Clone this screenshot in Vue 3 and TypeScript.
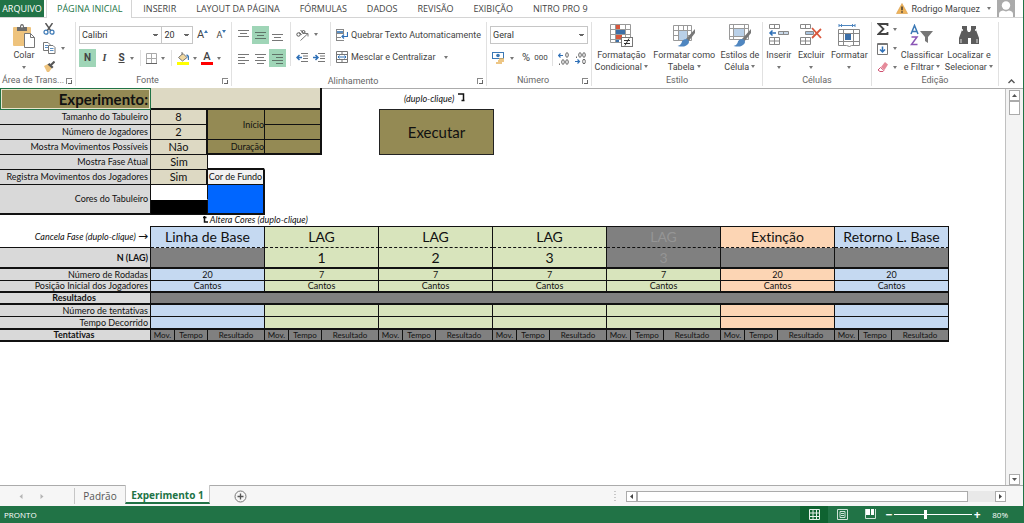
<script setup lang="ts">
import { ref } from 'vue'

interface Phase {
  name: string
  lag: string
  rounds: number
  tone: 'blue' | 'green' | 'peach'
  cancelled?: boolean
}

const ribbonTabs = [
  'INSERIR',
  'LAYOUT DA PÁGINA',
  'FÓRMULAS',
  'DADOS',
  'REVISÃO',
  'EXIBIÇÃO',
  'NITRO PRO 9',
]

const phases: Phase[] = [
  { name: 'Linha de Base', lag: '', rounds: 20, tone: 'blue' },
  { name: 'LAG', lag: '1', rounds: 7, tone: 'green' },
  { name: 'LAG', lag: '2', rounds: 7, tone: 'green' },
  { name: 'LAG', lag: '3', rounds: 7, tone: 'green' },
  { name: 'LAG', lag: '3', rounds: 7, tone: 'green', cancelled: true },
  { name: 'Extinção', lag: '', rounds: 20, tone: 'peach' },
  { name: 'Retorno L. Base', lag: '', rounds: 20, tone: 'blue' },
]

const zoom = ref(80)
</script>

<template>
  <div class="window">
    <nav class="tabs">
      <button class="tab file">ARQUIVO</button>
      <button class="tab current">PÁGINA INICIAL</button>
      <button v-for="t in ribbonTabs" :key="t" class="tab">{{ t }}</button>
      <div class="account">
        <svg width="12" height="11" viewBox="0 0 12 11">
          <path d="M6 .5 11.5 10.500H.5Z" fill="#f0b45a" stroke="#d99a45" stroke-width=".6" />
          <path d="M6 3.500v3.800M6 8.300v1.400" stroke="#333" stroke-width="1.400" />
        </svg>
        <button class="user">Rodrigo Marquez<i class="caret"></i></button>
        <svg class="avatar" width="18" height="17" viewBox="0 0 18 17">
          <rect width="18" height="17" fill="#ababab" />
          <circle cx="9" cy="5.500" r="4.200" fill="#fff" />
          <path d="M2 17v-3q0-3 4-3.500l3 1 3-1q4 .5 4 3.500v3Z" fill="#fff" />
        </svg>
      </div>
    </nav>

    <header class="ribbon">
      <section class="group g-clip">
        <div class="body">
          <button class="big paste">
            <svg width="22" height="24" viewBox="0 0 22 24">
              <rect x="0" y="3" width="18" height="19" rx="1" fill="#eec37d" />
              <path d="M4 3h3q0-3 2-3t2 3h3v4H4Z" fill="#6b6b6b" />
              <circle cx="9" cy="2.500" r="1" fill="#fff" />
              <path d="M11.500 9.500h6l4 4v10h-10Z" fill="#fff" stroke="#777" />
              <path d="M17.500 9.500v4h4" fill="none" stroke="#777" />
            </svg>
            <span>Colar</span><i class="caret"></i>
          </button>
          <div class="stack">
            <button aria-label="Recortar">
              <svg width="12" height="12" viewBox="0 0 12 12" fill="none">
                <path d="M2.500 0 8 8M9.500 0 4 8" stroke="#555" stroke-width="1.400" />
                <circle cx="3" cy="9.200" r="2" stroke="#3b78b5" stroke-width="1.200" />
                <circle cx="9" cy="9.200" r="2" stroke="#3b78b5" stroke-width="1.200" />
              </svg>
            </button>
            <button aria-label="Copiar">
              <svg width="13" height="12" viewBox="0 0 13 12" fill="#fff" stroke="#777">
                <path d="M.5.5H5l2 2V8.500H.5Z" />
                <path d="M2 3.500h3M2 5.500h3" stroke="#5b8fc4" />
                <path d="M5.500 3.500H10l2 2v6H5.500Z" />
                <path d="M7 6.500h3.500M7 8.500h3.500" stroke="#5b8fc4" />
              </svg>
              <i class="caret"></i>
            </button>
            <button aria-label="Pincel de Formatação">
              <svg width="12" height="11" viewBox="0 0 12 11">
                <path d="M1 5 5 3l4 4-3 4H4Z" fill="#eec37d" />
                <path d="m4.500 3.500 2-1.500 4 4-1.500 1.500Z" fill="#555" />
                <path d="m8 4 3.500-3.500" stroke="#555" stroke-width="2" />
              </svg>
            </button>
          </div>
        </div>
        <h2>Área de Trans...</h2>
        <button class="launcher" aria-label="Opções da Área de Transferência"></button>
      </section>

      <section class="group g-font">
        <div class="body rows">
          <div class="line">
            <select class="s-font" aria-label="Fonte"><option>Calibri</option></select>
            <select class="s-size" aria-label="Tamanho"><option>20</option></select>
            <button class="grow" aria-label="Aumentar Fonte">
              <span class="la">A</span>
              <svg width="4" height="10" viewBox="0 0 4 10"><path d="M0 3h4L2 0Z" fill="#3b78b5" /></svg>
            </button>
            <button class="grow small" aria-label="Diminuir Fonte">
              <span class="la">A</span>
              <svg width="4" height="10" viewBox="0 0 4 10"><path d="M0 0h4L2 3Z" fill="#3b78b5" /></svg>
            </button>
          </div>
          <div class="line">
            <button class="tog on"><b>N</b></button>
            <button class="tog"><b class="ital">I</b></button>
            <button class="tog"><b class="und">S</b></button>
            <i class="caret"></i>
            <span class="sep"></span>
            <button class="ico" aria-label="Bordas">
              <svg width="11" height="11" viewBox="0 0 11 11" fill="none" stroke="#aaa">
                <path d="M.5.5h10v10H.5ZM5.500.5v10M.5 5.500h10" />
                <path d="M0 10.500h11" stroke="#666" />
              </svg>
              <i class="caret"></i>
            </button>
            <span class="sep"></span>
            <button class="ico" aria-label="Cor de Preenchimento">
              <svg width="12" height="13" viewBox="0 0 12 13">
                <path d="m1.500 5.500 4.500-4 4 4-4.500 3.500Z" fill="#f2d9a0" stroke="#777" />
                <path d="M5 3V0" stroke="#777" />
                <path d="M9.500 3q2.500.5 2 5" fill="none" stroke="#3b78b5" stroke-width="1.500" />
                <rect y="10" width="12" height="3" fill="#ffff00" />
              </svg>
              <i class="caret"></i>
            </button>
            <button class="ico" aria-label="Cor da Fonte">
              <span class="fontcolor">A</span>
              <i class="caret"></i>
            </button>
          </div>
        </div>
        <h2>Fonte</h2>
        <button class="launcher" aria-label="Opções de Fonte"></button>
      </section>

      <section class="group g-align">
        <div class="body align">
          <div class="rows">
            <div class="line">
              <button class="al" aria-label="Alinhar em Cima">
                <svg width="11" height="11"><path d="M0 .5h11M2 3.500h7M0 6.500h11" stroke="#777" /></svg>
              </button>
              <button class="al on" aria-label="Alinhar no Meio">
                <svg width="11" height="11"><path d="M0 2.500h11M2 5.500h7M0 8.500h11" stroke="#5f7468" /></svg>
              </button>
              <button class="al" aria-label="Alinhar Embaixo">
                <svg width="11" height="11"><path d="M0 4.500h11M2 7.500h7M0 10.500h11" stroke="#777" /></svg>
              </button>
            </div>
            <div class="line">
              <button class="al" aria-label="Alinhar à Esquerda">
                <svg width="11" height="11"><path d="M0 1.500h11M0 4.500h7M0 7.500h11M0 10.500h7" stroke="#777" /></svg>
              </button>
              <button class="al" aria-label="Centralizar">
                <svg width="11" height="11"><path d="M0 1.500h11M2 4.500h7M0 7.500h11M2 10.500h7" stroke="#777" /></svg>
              </button>
              <button class="al on" aria-label="Alinhar à Direita">
                <svg width="11" height="11"><path d="M0 1.500h11M4 4.500h7M0 7.500h11M4 10.500h7" stroke="#5f7468" /></svg>
              </button>
            </div>
          </div>
          <div class="rows bordered">
            <div class="line">
              <button class="ico" aria-label="Orientação">
                <svg width="13" height="12" viewBox="0 0 13 12" fill="none" stroke="#555">
                  <circle cx="2.500" cy="5.500" r="1.700" />
                  <path d="M3.500 3.500 5.500 6M4.500 1l4 4" />
                  <circle cx="7.500" cy="3" r="1.500" />
                  <path d="M4.500 11.500 12 4.500M12 7.500v-3H9" stroke="#777" />
                </svg>
                <i class="caret"></i>
              </button>
            </div>
            <div class="line">
              <button class="ind" aria-label="Diminuir Recuo">
                <svg width="12" height="9" viewBox="0 0 12 9" fill="none">
                  <path d="M5 .5h7M7 3h5M7 5.500h5M5 8.500h7" stroke="#777" />
                  <path d="M6 4.500H1M3.500 2 1 4.500 3.500 7" stroke="#2f70b7" stroke-width="1.500" />
                </svg>
              </button>
              <button class="ind" aria-label="Aumentar Recuo">
                <svg width="12" height="9" viewBox="0 0 12 9" fill="none">
                  <path d="M5 .5h7M7 3h5M7 5.500h5M5 8.500h7" stroke="#777" />
                  <path d="M0 4.500h5M2.500 2 5 4.500 2.500 7" stroke="#2f70b7" stroke-width="1.500" />
                </svg>
              </button>
            </div>
          </div>
          <div class="rows bordered wide">
            <div class="line">
              <button class="ico">
                <svg width="12" height="12" viewBox="0 0 12 12" fill="none">
                  <path d="M.5 0v12M0 .5h8M3.500 2.500h4M0 4.500h8M0 8.500h5M0 11.500h8M7.500 0v4" stroke="#888" />
                  <rect x="1" y="2" width="6" height="2" fill="#5b8fc4" />
                  <path d="M11.500 3v4.500H6M8 5.500 6 7.500l2 2" stroke="#2f70b7" stroke-width="1.200" />
                </svg>
                <span>Quebrar Texto Automaticamente</span>
              </button>
            </div>
            <div class="line">
              <button class="ico">
                <svg width="12" height="12" viewBox="0 0 12 12" fill="none">
                  <path d="M.5.5h11v11H.5ZM.5 3.500h11M.5 8.500h11M6 .5v3M6 8.500v3" stroke="#777" />
                  <path d="M2 6h8M3.500 4.500 2 6l1.500 1.500M8.500 4.500 10 6 8.500 7.500" stroke="#2f70b7" />
                </svg>
                <span>Mesclar e Centralizar</span><i class="caret far"></i>
              </button>
            </div>
          </div>
        </div>
        <h2>Alinhamento</h2>
        <button class="launcher" aria-label="Opções de Alinhamento"></button>
      </section>

      <section class="group g-num">
        <div class="body rows">
          <div class="line">
            <select class="s-num" aria-label="Formato de Número"><option>Geral</option></select>
          </div>
          <div class="line num">
            <button class="ico" aria-label="Formato de Contabilização">
              <svg width="13" height="12" viewBox="0 0 13 12">
                <rect x=".5" y=".5" width="11" height="6" fill="#fff" stroke="#3b78b5" />
                <circle cx="6" cy="3.500" r="1.800" fill="#3b78b5" />
                <path d="M7 7h5M6 9h6M4 11h6" stroke="#e8b45e" stroke-width="1.400" />
              </svg>
              <i class="caret"></i>
            </button>
            <button class="pct">%</button>
            <button class="thou">000</button>
            <span class="sep"></span>
            <button class="dec" aria-label="Aumentar Casas Decimais">
              <svg width="11" height="7" viewBox="0 0 11 7" fill="none">
                <path d="M5 3.500H.8M2.500 1.500.5 3.500l2 2" stroke="#2f70b7" stroke-width="1.200" />
                <ellipse cx="9" cy="3" rx="1.300" ry="2.300" stroke="#666" />
              </svg>
              <svg width="11" height="6" viewBox="0 0 11 6" fill="none" stroke="#666">
                <ellipse cx="5" cy="3" rx="1.300" ry="2.300" /><ellipse cx="9" cy="3" rx="1.300" ry="2.300" /><path d="M1.500 4.500V6" />
              </svg>
            </button>
            <button class="dec" aria-label="Diminuir Casas Decimais">
              <svg width="11" height="6" viewBox="0 0 11 6" fill="none" stroke="#666">
                <ellipse cx="5" cy="3" rx="1.300" ry="2.300" /><ellipse cx="9" cy="3" rx="1.300" ry="2.300" /><path d="M1.500 4.500V6" />
              </svg>
              <svg width="11" height="7" viewBox="0 0 11 7" fill="none">
                <path d="M0 3.500h4.500M2.500 1.500l2 2-2 2" stroke="#2f70b7" stroke-width="1.200" />
                <ellipse cx="9" cy="3.500" rx="1.300" ry="2.300" stroke="#666" />
              </svg>
            </button>
          </div>
        </div>
        <h2>Número</h2>
        <button class="launcher" aria-label="Opções de Número"></button>
      </section>

      <section class="group g-style">
        <div class="body center">
          <button class="big">
            <svg width="23" height="24" viewBox="0 0 23 24">
              <path d="M.5.5h20v18H.5ZM.5 5.500h20M.5 10.500h20M.5 15.500h20M5.500.5v18M15.500.5v18" fill="#fff" stroke="#999" />
              <rect x="6" y="1" width="4" height="4" fill="#d8573c" /><rect x="6" y="6" width="9" height="4" fill="#3b6fa8" />
              <rect x="6" y="11" width="6" height="4" fill="#d8573c" /><rect x="6" y="16" width="3" height="2" fill="#3b6fa8" />
              <rect x="11.500" y="13.500" width="11" height="9" fill="#fff" stroke="#777" />
              <path d="M14 16.500h6M14 19.500h6M19 14.500l-4 7" stroke="#333" />
            </svg>
            <span>Formatação<br />Condicional <i class="caret"></i></span>
          </button>
          <button class="big">
            <svg width="24" height="24" viewBox="0 0 24 24">
              <path d="M1.500 1.500h18v15h-18ZM1.500 6.500h18M1.500 11.500h18M6.500 1.500v15M11.500 1.500v15M15.500 1.500v15" fill="#fff" stroke="#999" />
              <path d="M7 7h8v9H7Z" fill="#b9d0e8" />
              <path d="m23 5-9 10 2 3 7-9Z" fill="#777" />
              <path d="M15 15q-5 0-5.500 4-1 2.500-4 3 8 2 11-2.500Q18 17 15 15Z" fill="#4f86c0" />
            </svg>
            <span>Formatar como<br />Tabela <i class="caret"></i></span>
          </button>
          <button class="big">
            <svg width="24" height="24" viewBox="0 0 24 24">
              <path d="M1.500.5h19v15h-19ZM1.500 4.500h19M1.500 12.500h19M5.500.5v15M16.500.5v15" fill="#fff" stroke="#999" />
              <rect x="6" y="5" width="10" height="7" fill="#b9d0e8" />
              <path d="m23 5-9 10 2 3 7-9Z" fill="#777" />
              <path d="M15 15q-5 0-5.500 4-1 2.500-4 3 8 2 11-2.500Q18 17 15 15Z" fill="#4f86c0" />
            </svg>
            <span>Estilos de<br />Célula <i class="caret"></i></span>
          </button>
        </div>
        <h2>Estilo</h2>
      </section>

      <section class="group g-cells">
        <div class="body center">
          <button class="big">
            <svg width="22" height="24" viewBox="0 0 22 24" fill="#fff" stroke="#888">
              <path d="M1.500.5h10v4h-10ZM6.500.5v4M1.500 13.500h10v7h-10ZM6.500 13.500v7M1.500 17h10" />
              <path d="M10.500 7.500h10v3h-10ZM15.500 7.500v3" fill="#c9d8e8" />
              <path d="M8 9H2M4.500 6.500 2 9l2.500 2.500" fill="none" stroke="#2f70b7" stroke-width="1.500" />
            </svg>
            <span>Inserir</span><i class="caret"></i>
          </button>
          <button class="big">
            <svg width="22" height="24" viewBox="0 0 22 24" fill="#fff" stroke="#888">
              <path d="M.5.5h10v4H.5ZM5.500.5v4M.5 13.500h10v7H.5ZM5.500 13.500v7M.5 17h10" />
              <path d="M5.500 7.500h8v3h-8Z" fill="#a9c4e0" />
              <path d="m12 4 9 10M21 5l-9 9" stroke="#d8573c" stroke-width="1.800" />
            </svg>
            <span>Excluir</span><i class="caret"></i>
          </button>
          <button class="big">
            <svg width="22" height="24" viewBox="0 0 22 24" fill="#fff" stroke="#888">
              <path d="M1 1.500h16M1 0v3M17 0v3M4 0 2.500 1.500 4 3M14 0l1.500 1.500L14 3" fill="none" stroke="#4f86c0" />
              <path d="M.5 5.500h21v16h-8l-2 1-3-1h-8ZM.5 9.500h21M.5 17.500h21M5.500 5.500v16M15.500 5.500v16" />
              <rect x="7" y="10" width="6" height="6" fill="#3b6fa8" stroke="none" />
            </svg>
            <span>Formatar</span><i class="caret"></i>
          </button>
        </div>
        <h2>Células</h2>
      </section>

      <section class="group g-edit">
        <div class="body">
          <div class="stack edit">
            <button aria-label="Soma">
              <svg width="12" height="12" viewBox="0 0 12 12" fill="none" stroke="#444" stroke-width="1.800">
                <path d="M10.500 3V1H1.500l5 5-5 5h9V9" />
              </svg>
              <i class="caret"></i>
            </button>
            <button aria-label="Preencher">
              <svg width="12" height="12" viewBox="0 0 12 12" fill="none">
                <path d="M.5.5h10v11H.5Z" stroke="#777" /><path d="M0 1.500h11" stroke="#777" />
                <path d="M5.500 3.500V9M3 6.500 5.500 9 8 6.500" stroke="#2f70b7" stroke-width="1.500" />
              </svg>
              <i class="caret"></i>
            </button>
            <button aria-label="Limpar">
              <svg width="12" height="10" viewBox="0 0 12 10">
                <path d="m4 5 4-5 3 2.500L7.500 8Z" fill="#e68a9a" /><path d="M3.500 5.500 1 8l2 1.500h3L7 8.500Z" fill="#fff" stroke="#d05070" />
              </svg>
              <i class="caret"></i>
            </button>
          </div>
          <button class="big sort">
            <svg width="24" height="24" viewBox="0 0 24 24" fill="none">
              <path d="m1 10 3.500-8.500L8 10M2.200 7.500h4.600" stroke="#3b78b5" stroke-width="1.500" />
              <path d="M1.500 13H7L1.500 20.500H7.500" stroke="#8a55b5" stroke-width="1.500" />
              <path d="M10 7h13l-5 6v6l-3-2v-4Z" fill="#777" />
            </svg>
            <span>Classificar<br />e Filtrar <i class="caret"></i></span>
          </button>
          <button class="big find">
            <svg width="22" height="24" viewBox="0 0 22 24" fill="#5c5c5c">
              <path d="M4 2h5v4l1 2h2l1-2V2h5v4l3 8v6h-8v-6h-3v6H1v-6l3-8Z" />
              <path d="M4.500 5v2M17.500 5v2M3 15v4M19 15v4" stroke="#fff" stroke-width=".8" />
            </svg>
            <span>Localizar e<br />Selecionar <i class="caret"></i></span>
          </button>
        </div>
        <h2>Edição</h2>
      </section>
      <button class="collapse" aria-label="Recolher a Faixa de Opções">
        <svg width="7" height="5" viewBox="0 0 7 5"><path d="m.5 4 3-3 3 3" fill="none" stroke="#555" stroke-width="1.400" /></svg>
      </button>
    </header>

    <main class="workspace">
      <div class="sheet">
        <div class="top">
          <table class="params">
            <colgroup><col class="c-label" /><col class="c-val" /><col class="c-val" /><col class="c-val" /></colgroup>
            <tbody>
              <tr class="title"><th class="olive selected">Experimento:</th><td colspan="3" class="beige edge"></td></tr>
              <tr>
                <th>Tamanho do Tabuleiro</th><td class="beige big-r">8</td>
                <td rowspan="2" class="olive right">Início</td><td class="olive edge"></td>
              </tr>
              <tr><th>Número de Jogadores</th><td class="beige big-r">2</td><td class="olive edge"></td></tr>
              <tr>
                <th>Mostra Movimentos Possíveis</th><td class="beige big-r">Não</td>
                <td class="olive right heavy">Duração</td><td class="olive edge heavy"></td>
              </tr>
              <tr><th>Mostra Fase Atual</th><td class="beige">Sim</td><td class="none heavy"></td><td class="none"></td></tr>
              <tr><th>Registra Movimentos dos Jogadores</th><td class="beige big-r">Sim</td><td class="fundo edge">Cor de Fundo</td><td class="none"></td></tr>
              <tr><th rowspan="2" class="heavy">Cores do Tabuleiro</th><td class="white"></td><td rowspan="2" class="blue edge heavy"></td><td class="none"></td></tr>
              <tr><td class="black"></td><td class="none"></td></tr>
            </tbody>
          </table>
          <div class="run">
            <p class="note">(duplo-clique)
              <svg width="7" height="9" viewBox="0 0 7 9" fill="none" stroke="#111" stroke-width="1.500"><path d="M0 1h5.500v7M3.500 7.500h3" /></svg>
            </p>
            <button class="execute">Executar</button>
          </div>
        </div>
        <p class="note colors">
          <svg width="5" height="7" viewBox="0 0 5 7" fill="none" stroke="#111" stroke-width="1.500"><path d="M1.500 0v6H5M0 1.500h3.500" /></svg>
          Altera Cores (duplo-clique)
        </p>
        <table class="phases">
          <colgroup>
            <col class="c-label" />
            <template v-for="(p, i) in phases" :key="i"><col class="c-mov" /><col class="c-time" /><col class="c-res" /></template>
          </colgroup>
          <tbody>
            <tr class="names">
              <th class="plain">Cancela Fase (duplo-clique) <span class="arrow">→</span></th>
              <td v-for="(p, i) in phases" :key="i" colspan="3" :class="p.cancelled ? 'off' : p.tone">{{ p.name }}</td>
            </tr>
            <tr class="lags">
              <th class="strong">N (LAG)</th>
              <td v-for="(p, i) in phases" :key="i" colspan="3" :class="p.cancelled || !p.lag ? 'off' : p.tone">{{ p.lag }}</td>
            </tr>
            <tr><th>Número de Rodadas</th><td v-for="(p, i) in phases" :key="i" colspan="3" :class="p.tone">{{ p.rounds }}</td></tr>
            <tr class="thick"><th>Posição Inicial dos Jogadores</th><td v-for="(p, i) in phases" :key="i" colspan="3" :class="p.tone">Cantos</td></tr>
            <tr class="thick"><th class="strong mid">Resultados</th><td colspan="21" class="off"></td></tr>
            <tr><th>Número de tentativas</th><td v-for="(p, i) in phases" :key="i" colspan="3" :class="p.tone"></td></tr>
            <tr class="thick last"><th>Tempo Decorrido</th><td v-for="(p, i) in phases" :key="i" colspan="3" :class="p.tone"></td></tr>
            <tr class="thick heads">
              <th class="strong mid">Tentativas</th>
              <template v-for="(p, i) in phases" :key="i"><td>Mov.</td><td>Tempo</td><td>Resultado</td></template>
            </tr>
          </tbody>
        </table>
      </div>
      <div class="vscroll">
        <button aria-label="Rolar para cima"><svg width="5" height="3"><path d="M0 3h5L2.500 0Z" fill="#555" /></svg></button>
        <div class="vthumb"></div>
        <div class="fill"></div>
        <button aria-label="Rolar para baixo"><svg width="5" height="3"><path d="M0 0h5L2.500 3Z" fill="#555" /></svg></button>
      </div>
    </main>

    <div class="sheetbar">
      <div class="arrows">
        <button aria-label="Planilha anterior"><svg width="4" height="5"><path d="M3.500 0v5L.5 2.500Z" fill="#b5b5b5" /></svg></button>
        <button aria-label="Próxima planilha"><svg width="4" height="5"><path d="M.5 0v5l3-2.500Z" fill="#b5b5b5" /></svg></button>
      </div>
      <button class="stab">Padrão</button>
      <button class="stab active">Experimento 1</button>
      <button class="add" aria-label="Nova planilha">
        <svg width="13" height="13" viewBox="0 0 13 13" fill="none" stroke="#777"><circle cx="6.500" cy="6.500" r="5.500" /><path d="M6.500 3.500v6M3.500 6.500h6" stroke="#555" stroke-width="1.300" /></svg>
      </button>
      <div class="hzone">
        <svg class="grip" width="2" height="10"><path d="M1 0v10" stroke="#999" stroke-width="1" stroke-dasharray="1 2" /></svg>
        <div class="hscroll">
          <button aria-label="Rolar para a esquerda"><svg width="3" height="5"><path d="M3 0v5L0 2.500Z" fill="#444" /></svg></button>
          <div class="hthumb"></div>
          <button aria-label="Rolar para a direita"><svg width="3" height="5"><path d="M0 0v5l3-2.500Z" fill="#444" /></svg></button>
        </div>
      </div>
    </div>

    <footer class="status">
      <span>PRONTO</span>
      <div class="views">
        <button class="view on-dark" aria-label="Normal">
          <svg width="11" height="11" fill="none" stroke="#e6f1ea"><path d="M.5.5h10v10H.5ZM4 .5v10M7.500.5v10M.5 4h10M.5 7.500h10" /></svg>
        </button>
        <button class="view" aria-label="Layout da Página">
          <svg width="11" height="11" fill="none" stroke="#cfe3d7"><path d="M.5.5h10v10H.5ZM3 2.500h5v6H3ZM4 4.500h3M4 6.500h3" /></svg>
        </button>
        <button class="view" aria-label="Visualização de Quebra de Página">
          <svg width="11" height="11"><path d="M0 0h5v6H0ZM6 0h3v6H6Z" fill="#fff" /><path d="M.5 0v9.500h10V0" fill="none" stroke="#cfe3d7" /></svg>
        </button>
      </div>
      <button class="zbtn" aria-label="Reduzir">−</button>
      <input v-model="zoom" class="zoom" type="range" min="10" max="186" aria-label="Zoom" />
      <button class="zbtn" aria-label="Ampliar">+</button>
      <button class="level">{{ zoom }}%</button>
    </footer>
  </div>
</template>

<style>
body {
  margin: 0;
}
</style>

<style scoped>
.window {
  display: flex;
  flex-direction: column;
  min-height: 100vh;
  box-sizing: border-box;
  border-right: 1px solid #217346;
  background: #fff;
  color: #444;
  font: 9px/12px 'Open Sans', 'Noto Sans', sans-serif;
  font-variant-ligatures: none;
}
.window * {
  box-sizing: border-box;
}
button {
  display: inline-flex;
  align-items: center;
  justify-content: center;
  padding: 0;
  border: 0;
  background: none;
  color: inherit;
  font: inherit;
  font-variant-ligatures: none;
  white-space: nowrap;
}
svg {
  flex: none;
}
p,
h2 {
  margin: 0;
}
.caret {
  display: inline-block;
  flex: none;
  border: 2px solid transparent;
  border-top: 3px solid #777;
  border-bottom: 0;
}

/* ribbon tabs */
.tabs {
  display: flex;
  height: 18px;
  border-bottom: 1px solid #d4d4d4;
}
.tab {
  padding: 0 10px;
  height: 17px;
}
.file {
  padding: 0 2px;
  width: 44px;
  background: #217346;
  color: #fff;
}
.current {
  margin: 0 1px 0 2px;
  padding: 0 9px 0 10px;
  height: 18px;
  border-right: 1px solid #d4d4d4;
  border-left: 1px solid #d4d4d4;
  background: #fff;
  color: #217346;
}
.account {
  display: flex;
  align-items: center;
  gap: 4px;
  margin-left: auto;
  padding-right: 8px;
  font-family: Roboto, sans-serif;
}
.user {
  gap: 7px;
  margin-right: 2px;
}
.avatar {
  height: 17px;
}

/* ribbon */
.ribbon {
  display: flex;
  height: 71px;
  padding-top: 4px;
  border-bottom: 1px solid #ababab;
  font-family: Roboto, 'Open Sans', sans-serif;
}
.group {
  position: relative;
  display: flex;
  flex: none;
  flex-direction: column;
  margin-bottom: 2px;
  border-right: 1px solid #e1e1e1;
}
.group h2 {
  color: #666;
  font: inherit;
  text-align: center;
}
.g-clip {
  width: 76px;
}
.g-clip h2 {
  padding-left: 2px;
  text-align: left;
}
.g-font {
  width: 156px;
}
.g-align {
  width: 255px;
}
.g-num {
  width: 105px;
}
.g-style {
  width: 171px;
}
.g-cells {
  width: 109px;
}
.g-edit {
  width: 127px;
}
.g-font h2,
.g-align h2,
.g-num h2 {
  padding-right: 12px;
}
.body {
  display: flex;
  height: 53px;
}
.launcher {
  position: absolute;
  right: 3px;
  bottom: 2px;
  width: 6px;
  height: 6px;
  border-top: 1px solid #888;
  border-left: 1px solid #888;
}
.launcher::after {
  content: '';
  width: 3px;
  height: 3px;
  border-right: 1px solid #666;
  border-bottom: 1px solid #666;
}
.big {
  flex-direction: column;
  justify-content: flex-start;
  padding-top: 2px;
}
.big svg {
  margin-bottom: 1px;
}
.big > .caret {
  margin-top: 5px;
}
.big span {
  line-height: 12px;
  text-align: center;
}
.big span .caret {
  vertical-align: 2px;
}
.paste {
  width: 34px;
  margin-left: 7px;
}
.stack {
  display: flex;
  flex-direction: column;
  align-items: flex-start;
  justify-content: space-between;
  padding: 1px 0 2px;
}
.stack button {
  gap: 5px;
}
.g-clip .stack {
  margin-left: 2px;
}
.rows {
  display: flex;
  flex-direction: column;
  gap: 5px;
  padding-top: 4px;
}
.line {
  display: flex;
  align-items: center;
  height: 18px;
}
select {
  height: 18px;
  padding: 0 2px;
  appearance: none;
  border: 1px solid #c6c6c6;
  border-radius: 0;
  background:
    linear-gradient(45deg, transparent 50%, #666 50%) right 6px center / 3px 3px no-repeat,
    linear-gradient(-45deg, transparent 50%, #666 50%) right 3px center / 3px 3px no-repeat,
    #fff;
  background:
    linear-gradient(#666, #666) right 3px top 7px / 5px 1px no-repeat,
    linear-gradient(#666, #666) right 4px top 8px / 3px 1px no-repeat,
    #fff;
  color: #333;
  font: inherit;
}
.g-font .line {
  margin-left: 3px;
}
.s-font {
  width: 84px;
}
.s-size {
  width: 32px;
  margin-left: -1px;
}
.grow {
  width: 19px;
}
.la {
  font-size: 11px;
}
.small .la {
  font-size: 9px;
}
.tog {
  width: 17px;
  height: 18px;
  font-size: 10px;
}
.on {
  background: #9fd5b7;
}
.ital {
  font-family: 'Liberation Serif', serif;
  font-style: italic;
}
.und {
  text-decoration: underline;
}
.sep {
  width: 1px;
  height: 16px;
  margin: 0 5px 0 6px;
  background: #e1e1e1;
}
.ico {
  gap: 5px;
}
.g-font .ico {
  gap: 4px;
}
.ico + .ico {
  margin-left: 4px;
}
.fontcolor {
  width: 12px;
  height: 13px;
  border-bottom: 3px solid #f00;
  font-size: 11px;
  font-weight: 500;
  line-height: 10px;
}
.align {
  padding-left: 3px;
}
.align .rows:first-child {
  width: 55px;
}
.al {
  width: 17px;
  height: 18px;
}
.bordered {
  margin-bottom: 9px;
  padding-left: 5px;
  border-left: 1px solid #e1e1e1;
}
.ind {
  width: 17px;
  justify-content: flex-start;
}
.wide .ico {
  gap: 3px;
}
.far {
  margin-left: 6px;
}
.s-num {
  width: 98px;
  margin-left: 3px;
}
.num {
  padding-left: 5px;
}
.pct {
  width: 12px;
  margin-left: 6px;
  font-size: 11px;
}
.thou {
  width: 18px;
  font-size: 8px;
}
.num .sep {
  margin: 0 4px 0 2px;
}
.dec {
  flex-direction: column;
  width: 12px;
  margin-right: 5px;
}
.center {
  justify-content: space-around;
}
.edit {
  width: 24px;
  margin-left: 5px;
}
.edit button {
  gap: 4px;
}
.sort {
  width: 42px;
}
.find {
  width: 52px;
}
.collapse {
  align-self: flex-end;
  margin: 0 8px 4px auto;
}

/* worksheet */
.workspace {
  display: flex;
  flex: 1;
}
.sheet {
  flex: 1;
  border-right: 1px solid #c0c0c0;
  color: #111;
  font: 9px/10px Lato, 'Open Sans', sans-serif;
  font-variant-ligatures: none;
}
.top {
  display: flex;
}
table {
  border-spacing: 0;
  table-layout: fixed;
}
td,
th {
  padding: 0 2px;
  overflow: hidden;
  border-right: 1px solid #111;
  border-bottom: 1px solid #111;
  font-weight: 400;
  text-align: center;
  white-space: nowrap;
}
th {
  padding: 0 2px 0 0;
  background: #d9d9d9;
  text-align: right;
}
.c-label {
  width: 151px;
}
.c-val {
  width: 57px;
}
.params {
  width: 322px;
  margin-top: -1px;
}
.params tr {
  height: 15px;
}
.params .title {
  height: 22px;
}
.params .title td {
  border-bottom-width: 2px;
}
.params .beige {
  font-size: 11px;
}
.olive {
  background: #948a54;
}
.title .selected {
  border: 1px solid #217346;
  box-shadow: inset 0 0 0 1px #e9e5cc;
  font-size: 15px;
  font-weight: 700;
}
.right {
  padding: 0;
  text-align: right;
}
.beige {
  background: #ddd9c3;
}
.params .edge {
  border-right-width: 2px;
}
.params .big-r {
  border-right-width: 2px;
}
.params .heavy {
  border-bottom-width: 2px;
}
.params .none {
  border-color: transparent;
}
.params .none.heavy {
  border-bottom-color: #111;
}
.fundo {
  padding: 0;
  background: #f2f2f2;
}
.white {
  border-bottom-color: #fff;
}
.black {
  background: #000;
}
.run {
  display: flex;
  flex-direction: column;
  width: 115px;
  margin-left: 57px;
}
.note {
  font-style: italic;
}
.run .note {
  height: 20px;
  padding: 4px 0 0 25px;
  white-space: nowrap;
}
.run svg {
  margin-left: 2px;
}
.execute {
  height: 46px;
  border: 1px solid #222;
  background: #948a54;
  font-size: 15px;
}
.colors {
  height: 11px;
  padding-left: 203px;
}
.c-mov {
  width: 24px;
}
.c-time {
  width: 33px;
}
.c-res {
  width: 57px;
}
.phases {
  width: 949px;
}
.phases tr {
  height: 12px;
}
.phases tr.names {
  height: 22px;
}
.names td {
  border-top: 1px solid #111;
  border-bottom-style: dashed;
  font-size: 14px;
  line-height: 18px;
}
.phases tr.lags {
  height: 21px;
}
.lags td {
  border-bottom-width: 2px;
  font-size: 14px;
  line-height: 18px;
}
.lags th {
  border-bottom-width: 2px;
}
.plain {
  background: #fff;
  font-style: italic;
}
.arrow {
  font-family: 'DejaVu Sans', sans-serif;
  font-style: normal;
  font-size: 12px;
}
.strong {
  font-weight: 700;
}
.mid {
  text-align: center;
}
.phases .last {
  height: 13px;
}
.thick > * {
  border-bottom-width: 2px;
}
.heads td {
  padding: 0;
  background: #808080;
  font-size: 8px;
}
.blue {
  background: #c5d9f1;
}
.blue.edge {
  background: #0066ff;
}
.green {
  background: #d8e4bc;
}
.peach {
  background: #fcd5b4;
}
.off {
  background: #808080;
  color: #959595;
}

/* scrollbars and sheet tabs */
.vscroll {
  display: flex;
  flex-direction: column;
  width: 17px;
  padding: 1px 3px 0 3px;
  background: #f3f3f3;
}
.vscroll button {
  height: 11px;
  border: 1px solid #ababab;
  background: #fff;
}
.vthumb {
  height: 14px;
  border: 1px solid #ababab;
  background: #fff;
}
.fill {
  flex: 1;
}
.sheetbar {
  display: flex;
  align-items: stretch;
  height: 21px;
  border-top: 1px solid #ababab;
  background: #f6f6f6;
  font-size: 10px;
}
.arrows {
  display: flex;
  gap: 17px;
  width: 75px;
  margin: 2px 0;
  padding-left: 19px;
  border-right: 1px solid #c6c6c6;
}
.stab {
  width: 50px;
  color: #555;
}
.active {
  width: 85px;
  margin: -1px 0 2px;
  padding-top: 3px;
  border-right: 1px solid #c6c6c6;
  border-bottom: 2px solid #217346;
  border-left: 1px solid #c6c6c6;
  background: #fff;
  color: #217346;
  font-weight: 700;
}
.add {
  margin-left: 24px;
}
.hzone {
  display: flex;
  align-items: center;
  width: 40%;
  margin-left: auto;
  padding-right: 17px;
}
.grip {
  margin-right: 10px;
}
.hscroll {
  display: flex;
  flex: 1;
  height: 11px;
  background: #e9e9e9;
}
.hscroll button {
  width: 11px;
  border: 1px solid #ababab;
  background: #fff;
}
.hthumb {
  flex: 1;
  margin-right: 27px;
  border: 1px solid #ababab;
  background: #fff;
}
.status {
  display: flex;
  align-items: center;
  height: 17px;
  padding: 0 15px 0 4px;
  background: #217346;
  color: #fff;
  font-size: 8px;
}
.views {
  display: flex;
  align-self: stretch;
  margin-left: auto;
}
.view {
  width: 28px;
}
.on-dark {
  background: #0f6331;
}
.zbtn {
  width: 10px;
  font-size: 12px;
  font-weight: 700;
}
.zoom {
  width: 78px;
  height: 10px;
  margin: 0;
  appearance: none;
  background: linear-gradient(#fff, #fff) center / 100% 1px no-repeat;
}
.zoom::-webkit-slider-thumb {
  width: 3px;
  height: 9px;
  appearance: none;
  background: #fff;
}
.level {
  margin-left: 10px;
}
</style>
